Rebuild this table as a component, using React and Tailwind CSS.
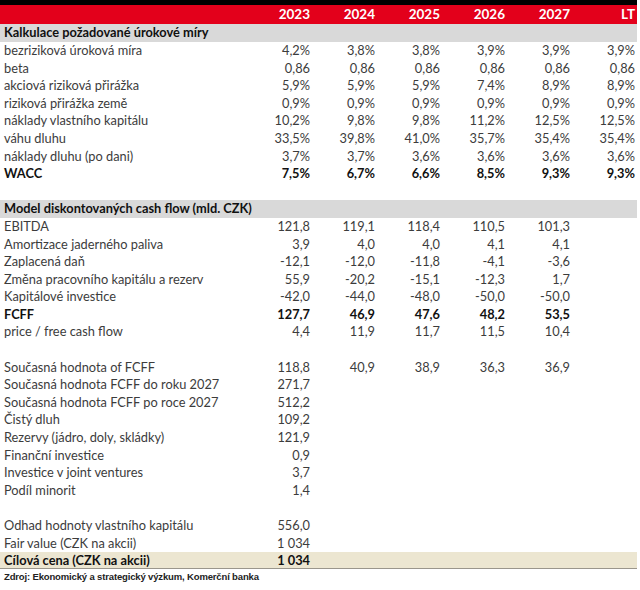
import React from "react";

const years = ["2023", "2024", "2025", "2026", "2027", "LT"];

const rows = [
  { type: "section", label: "Kalkulace požadované úrokové míry" },
  { label: "bezriziková úroková míra", v: ["4,2%", "3,8%", "3,8%", "3,9%", "3,9%", "3,9%"] },
  { label: "beta", v: ["0,86", "0,86", "0,86", "0,86", "0,86", "0,86"] },
  { label: "akciová riziková přirážka", v: ["5,9%", "5,9%", "5,9%", "7,4%", "8,9%", "8,9%"] },
  { label: "riziková přirážka země", v: ["0,9%", "0,9%", "0,9%", "0,9%", "0,9%", "0,9%"] },
  { label: "náklady vlastního kapitálu", v: ["10,2%", "9,8%", "9,8%", "11,2%", "12,5%", "12,5%"] },
  { label: "váhu dluhu", v: ["33,5%", "39,8%", "41,0%", "35,7%", "35,4%", "35,4%"] },
  { label: "náklady dluhu (po dani)", v: ["3,7%", "3,7%", "3,6%", "3,6%", "3,6%", "3,6%"] },
  { label: "WACC", bold: true, v: ["7,5%", "6,7%", "6,6%", "8,5%", "9,3%", "9,3%"] },
  { type: "blank" },
  { type: "section", label: "Model diskontovaných cash flow (mld. CZK)" },
  { label: "EBITDA", v: ["121,8", "119,1", "118,4", "110,5", "101,3"] },
  { label: "Amortizace jaderného paliva", v: ["3,9", "4,0", "4,0", "4,1", "4,1"] },
  { label: "Zaplacená daň", v: ["-12,1", "-12,0", "-11,8", "-4,1", "-3,6"] },
  { label: "Změna pracovního kapitálu a rezerv", v: ["55,9", "-20,2", "-15,1", "-12,3", "1,7"] },
  { label: "Kapitálové investice", v: ["-42,0", "-44,0", "-48,0", "-50,0", "-50,0"] },
  { label: "FCFF", bold: true, v: ["127,7", "46,9", "47,6", "48,2", "53,5"] },
  { label: "price / free cash flow", v: ["4,4", "11,9", "11,7", "11,5", "10,4"] },
  { type: "blank" },
  { label: "Současná hodnota of FCFF", v: ["118,8", "40,9", "38,9", "36,3", "36,9"] },
  { label: "Současná hodnota FCFF do roku 2027", v: ["271,7"] },
  { label: "Současná hodnota FCFF po roce 2027", v: ["512,2"] },
  { label: "Čistý dluh", v: ["109,2"] },
  { label: "Rezervy (jádro, doly, skládky)", v: ["121,9"] },
  { label: "Finanční investice", v: ["0,9"] },
  { label: "Investice v joint ventures", v: ["3,7"] },
  { label: "Podíl minorit", v: ["1,4"] },
  { type: "blank" },
  { label: "Odhad hodnoty vlastního kapitálu", v: ["556,0"] },
  { label: "Fair value (CZK na akcii)", v: ["1 034"] },
  { type: "total", label: "Cílová cena (CZK na akcii)", v: ["1 034"] },
];

function Row({ row }) {
  if (row.type === "blank") return <div className="h-[17.6px]" />;
  if (row.type === "section")
    return (
      <div className="h-[17.6px] bg-[#d9d9d9] flex items-center pl-[4px] font-bold text-[#111]">
        {row.label}
      </div>
    );
  return (
    <div
      className={
        "h-[17.6px] grid grid-cols-[245px_repeat(6,65px)] items-center " +
        (row.type === "total" ? "bg-[#ece6d1] border-b border-[#9a968c] text-[#111] font-bold" : row.bold ? "font-bold text-[#111]" : "text-[#3c3c3c]")
      }
    >
      <div className="pl-[4px] whitespace-nowrap">{row.label}</div>
      {years.map((y, i) => (
        <div key={y} className="text-right">
          {row.v[i] ?? ""}
        </div>
      ))}
    </div>
  );
}

export default function App() {
  return (
    <div className="w-[640px] h-[590px] bg-white overflow-hidden">
      <div className="w-[637px] text-[12.8px] leading-none font-['Lato',sans-serif]">
        <div className="h-[5px] bg-black" />
        <div className="h-[19px] bg-[#e3001b] grid grid-cols-[245px_repeat(6,65px)] items-center text-white font-bold text-[13.5px]">
          <div />
          {years.map((y) => (
            <div key={y} className="text-right">{y}</div>
          ))}
        </div>
        {rows.map((r, i) => (
          <Row key={i} row={r} />
        ))}
        <div className="pl-[4px] pt-[3px] text-[9.5px] font-bold text-[#222] font-['Liberation_Sans',sans-serif] tracking-[-0.15px]">
          Zdroj: Ekonomický a strategický výzkum, Komerční banka
        </div>
      </div>
    </div>
  );
}
